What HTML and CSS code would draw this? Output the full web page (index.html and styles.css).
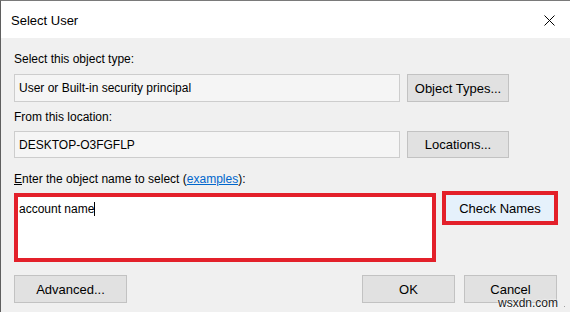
FILE: index.html
```html
<!DOCTYPE html>
<html lang="en">
<head>
    <meta charset="UTF-8">
    <title>Select User</title>
    <link rel="stylesheet" href="styles.css">
</head>
<body>
    <div class="dialog">
        <div class="titlebar">
            <span class="title">Select User</span>
            <svg class="close" width="11" height="11" viewBox="0 0 11 11">
                <path d="M0.5 0.5 L10.5 10.5 M10.5 0.5 L0.5 10.5" stroke="#000" stroke-width="1" fill="none"/>
            </svg>
        </div>
        <div class="content">
            <div class="label first">Select this object type:</div>
            <div class="row">
                <div class="field">User or Built-in security principal</div>
                <button class="btn side">Object Types...</button>
            </div>

            <div class="label">From this location:</div>
            <div class="row">
                <div class="field short">DESKTOP-O3FGFLP</div>
                <button class="btn side short">Locations...</button>
            </div>

            <div class="label third"><u>E</u>nter the object name to select (<a href="#" class="link">examples</a>):</div>
            <div class="row names">
                <div class="highlight area">
                    <div class="textarea">account name<span class="caret"></span></div>
                </div>
                <div class="highlight check">
                    <button class="btn hover">Check Names</button>
                </div>
            </div>

            <div class="footer">
                <button class="btn wide">Advanced...</button>
                <div class="footer-right">
                    <button class="btn ok">OK</button>
                    <button class="btn ok">Cancel</button>
                </div>
            </div>
        </div>
        <div class="grip"></div>
        <div class="watermark">wsxdn.com</div>
    </div>
</body>
</html>
```

FILE: styles.css
```css
body {
    margin: 0;
    background-color: #f0f0f0;
    font-family: "Liberation Sans", Arial, sans-serif;
    font-size: 12px;
    color: #000;
}
.dialog {
    position: relative;
    width: 570px;
    height: 312px;
    box-sizing: border-box;
    border-left: 1px solid #5f5f5f;
    border-top: 1px solid #7a7a7a;
    background-color: #f0f0f0;
    overflow: hidden;
}
.titlebar {
    height: 37px;
    background-color: #fff;
    display: flex;
    align-items: center;
    justify-content: space-between;
    padding: 0 15px 0 10px;
}
.title {
    font-size: 13px;
    margin-top: 1px;
}
.close {
    margin-top: 1px;
}
.content {
    padding-left: 13px;
}
.label {
    height: 16px;
    line-height: 16px;
    margin-top: 7px;
    margin-bottom: 6px;
}
.label.first {
    margin-top: 13px;
    margin-bottom: 7px;
}
.label.third {
    margin-top: 13px;
    margin-bottom: 6px;
}
.link {
    color: #0066cc;
}
.row {
    display: flex;
    align-items: center;
    gap: 7px;
}
.field {
    width: 386px;
    height: 28px;
    box-sizing: border-box;
    border: 1px solid #cdcdcd;
    background-color: #f5f5f5;
    padding-left: 4px;
    display: flex;
    align-items: center;
}
.field.short {
    height: 27px;
}
.btn {
    font-family: "Liberation Sans", Arial, sans-serif;
    font-size: 13px;
    line-height: 13px;
    color: #000;
    background-color: #e1e1e1;
    border: 1px solid #c2c2c2;
    box-sizing: border-box;
    padding: 0;
    margin: 0;
}
.btn.side {
    width: 102px;
    height: 28px;
}
.btn.side.short {
    height: 27px;
}
.row.names {
    align-items: flex-start;
    gap: 6px;
}
.highlight {
    border: 4px solid #e3202a;
    box-sizing: border-box;
}
.area {
    width: 422px;
    height: 69px;
}
.textarea {
    height: 100%;
    background-color: #fff;
    padding: 4px 0 0 1px;
    box-sizing: border-box;
    line-height: 16px;
}
.caret {
    display: inline-block;
    width: 1px;
    height: 14px;
    background-color: #000;
    vertical-align: -3px;
}
.check {
    width: 116px;
    height: 34px;
    margin-top: -2px;
}
.btn.hover {
    width: 100%;
    height: 100%;
    background-color: #e5f1fb;
    border: none;
}
.footer {
    display: flex;
    justify-content: space-between;
    margin-top: 13px;
    width: 543px;
}
.footer-right {
    display: flex;
    gap: 9px;
}
.btn.wide {
    width: 113px;
    height: 28px;
}
.btn.ok {
    width: 93px;
    height: 28px;
}
.grip {
    position: absolute;
    right: 3px;
    bottom: 3px;
    width: 7px;
    height: 7px;
    background-image: radial-gradient(circle, #a0a0a0 0.8px, transparent 1px);
    background-size: 3px 3px;
    clip-path: polygon(100% 0, 100% 100%, 0 100%);
}
.watermark {
    position: absolute;
    left: 497px;
    top: 296px;
    font-size: 12px;
    line-height: 12px;
    color: #222;
    text-shadow: 0 0 2px #fff, 0 0 2px #fff;
}
```
